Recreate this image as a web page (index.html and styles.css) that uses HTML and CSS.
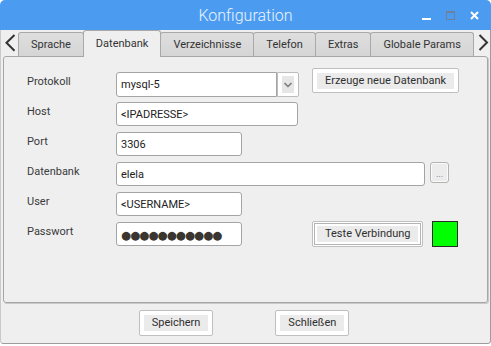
FILE: index.html
```html
<!doctype html>
<html lang="de">
	<head>
		<meta charset="UTF-8" />
		<title>Konfiguration</title>
		<link rel="stylesheet" href="styles.css">
	</head>
	<body>
		<div class="window">
			<div class="titlebar">
				<span></span>
				<span class="title">Konfiguration</span>
				<div class="wm-buttons">
					<svg width="10" height="10" viewBox="0 0 10 10"><rect x="0" y="7" width="9" height="2" fill="#fff"/></svg>
					<svg width="10" height="10" viewBox="0 0 10 10"><rect x="0.5" y="0.5" width="8" height="8" fill="none" stroke="#6d809c"/><rect x="0" y="0" width="9" height="2" fill="#6d809c"/></svg>
					<svg width="10" height="10" viewBox="0 0 10 10"><path d="M1 1 L8 8 M8 1 L1 8" stroke="#fff" stroke-width="2"/></svg>
				</div>
			</div>

			<div class="client">
				<div class="tabbar">
					<span class="tab-arrow left">
						<svg width="17" height="26" viewBox="0 0 17 26"><path d="M13.5 5 L5.5 12.8 L13.5 20.8" fill="none" stroke="#333" stroke-width="2"/></svg>
					</span>
					<div class="tabs">
						<span class="tab">Sprache</span>
						<span class="tab active">Datenbank</span>
						<span class="tab">Verzeichnisse</span>
						<span class="tab">Telefon</span>
						<span class="tab">Extras</span>
						<span class="tab">Globale Params</span>
					</div>
					<span class="tab-arrow right">
						<svg width="17" height="26" viewBox="0 0 17 26"><path d="M5.5 5 L13 12.5 L5.5 20" fill="none" stroke="#333" stroke-width="2"/></svg>
					</span>
				</div>

				<div class="panel">
					<div class="row">
						<span class="label">Protokoll</span>
						<div class="combo">
							<span class="field w-combo">mysql-5</span>
							<span class="combo-btn">
								<svg width="12" height="17" viewBox="0 0 12 17"><rect width="12" height="17" fill="#e6e6e6"/><path d="M2.5 7 L6 10.5 L9.5 7" fill="none" stroke="#777" stroke-width="1.5"/></svg>
							</span>
						</div>
						<button class="btn btn-create"><span>Erzeuge neue Datenbank</span></button>
					</div>
					<div class="row">
						<span class="label">Host</span>
						<span class="field w-host">&lt;IPADRESSE&gt;</span>
					</div>
					<div class="row">
						<span class="label">Port</span>
						<span class="field w-short">3306</span>
					</div>
					<div class="row">
						<span class="label">Datenbank</span>
						<span class="field w-long">elela</span>
						<button class="btn-dots">...</button>
					</div>
					<div class="row">
						<span class="label">User</span>
						<span class="field w-short">&lt;USERNAME&gt;</span>
					</div>
					<div class="row">
						<span class="label">Passwort</span>
						<span class="field w-short password">●●●●●●●●●●●</span>
						<button class="btn btn-test"><span>Teste Verbindung</span></button>
						<span class="status-ok"></span>
					</div>
				</div>

				<div class="footer">
					<button class="btn"><span>Speichern</span></button>
					<button class="btn"><span>Schließen</span></button>
				</div>
			</div>
		</div>
	</body>
</html>
```

FILE: styles.css
```css
body {
	margin: 0;
	background: #fff;
	font-family: Roboto, 'Liberation Sans', sans-serif;
	font-size: 11px;
	color: #333;
}
.window {
	width: 491px;
	height: 344px;
	border-radius: 5px 5px 3px 3px;
	overflow: hidden;
	display: flex;
	flex-direction: column;
}
.titlebar {
	height: 30px;
	flex: none;
	background: #4b9cf1;
	display: grid;
	grid-template-columns: 1fr auto 1fr;
}
.title {
	font-size: 16px;
	font-weight: 300;
	color: #eaf3ff;
	line-height: 30px;
	padding-top: 1px;
}
.wm-buttons {
	justify-self: end;
	display: flex;
	gap: 14px;
	margin-top: 11px;
	padding-right: 11px;
}
.wm-buttons svg {
	display: block;
}
.client {
	flex: 1;
	background: #efefef;
	border: 1px solid #9c9c9c;
	border-top: none;
	border-left-color: #cacaca;
	border-radius: 0 0 3px 3px;
}
.tabbar {
	height: 26px;
	display: flex;
	align-items: flex-end;
}
.tab-arrow {
	width: 17px;
	flex: none;
	height: 26px;
	align-self: stretch;
}
.tab-arrow svg {
	display: block;
}
.tabs {
	display: flex;
	align-items: flex-end;
	flex: none;
}
.tab {
	height: 24px;
	box-sizing: border-box;
	padding: 0 12px;
	line-height: 23px;
	border: 1px solid #a9a9a9;
	border-bottom: none;
	border-radius: 3px 3px 0 0;
	background: linear-gradient(#dedede, #d5d5d5);
	margin-left: -1px;
	color: #333;
	white-space: nowrap;
}
.tab:first-child {
	margin-left: 0;
}
.tab.active {
	height: 27px;
	line-height: 26px;
	margin-bottom: -1px;
	background: #efefef;
	position: relative;
	z-index: 1;
}
.panel {
	height: 247px;
	box-sizing: border-box;
	margin: 0 2px;
	border: 1px solid #a6a6a6;
	border-radius: 3px;
	box-shadow: 1px 1px 0 #c9c9c9;
	padding: 15px 0 0 23px;
	display: flex;
	flex-direction: column;
	gap: 6px;
}
.row {
	height: 24px;
	display: flex;
	align-items: flex-start;
}
.label {
	width: 89px;
	flex: none;
	line-height: 20px;
	color: #3a3a3a;
}
.field {
	height: 24px;
	box-sizing: border-box;
	border: 1px solid #a4a4a4;
	border-radius: 3px;
	background: #fff;
	padding: 1px 4px 0;
	line-height: 21px;
	color: #222;
	white-space: nowrap;
	overflow: hidden;
}
.w-combo {
	width: 161px;
	border-radius: 3px 0 0 3px;
	height: 25px;
}
.w-host {
	width: 182px;
}
.w-short {
	width: 126px;
}
.w-long {
	width: 309px;
}
.combo {
	display: flex;
}
.combo-btn {
	width: 22px;
	height: 25px;
	box-sizing: border-box;
	border: 1px solid #bdbdbd;
	border-radius: 0 2px 2px 0;
	background: #fff;
	display: flex;
	align-items: center;
	justify-content: center;
}
.combo-btn svg {
	display: block;
}
.btn {
	font: inherit;
	color: #2f2f2f;
	background: #fff;
	border: 1px solid #bfbfbf;
	border-radius: 2px;
	padding: 4px;
	margin: 0;
	cursor: default;
}
.btn span {
	display: block;
	background: #ebebeb;
	padding: 0 8px;
	line-height: 16px;
	white-space: nowrap;
}
.btn-create {
	margin-left: 13px;
	margin-top: -4px;
	padding-bottom: 3px;
}
.btn-test {
	margin-left: 70px;
	margin-top: -1px;
	box-shadow: inset 0 0 0 1px #fff, inset 0 0 0 2px #b4b4b4;
}
.btn-dots {
	width: 19px;
	height: 21px;
	margin-left: 5px;
	padding: 0 0 3px;
	border: 1px solid #b3b3b3;
	border-radius: 3px;
	background: #ececec;
	box-shadow: inset 0 0 0 1px #fafafa;
	font: 9px Roboto, sans-serif;
	color: #5c6c8c;
	display: flex;
	align-items: flex-end;
	justify-content: center;
	line-height: 9px;
}
.password {
	font-family: 'DejaVu Sans', sans-serif;
	font-size: 11.5px;
	color: #3b3530;
	letter-spacing: -0.9px;
	padding-left: 4px;
	padding-top: 2px;
}
.status-ok {
	width: 26px;
	height: 26px;
	box-sizing: border-box;
	margin-left: 9px;
	margin-top: -1px;
	background: #00ff00;
	border: 1px solid #2a2a2a;
}
.footer {
	display: flex;
	justify-content: center;
	gap: 62px;
	padding-top: 7px;
	padding-right: 3px;
}
```
